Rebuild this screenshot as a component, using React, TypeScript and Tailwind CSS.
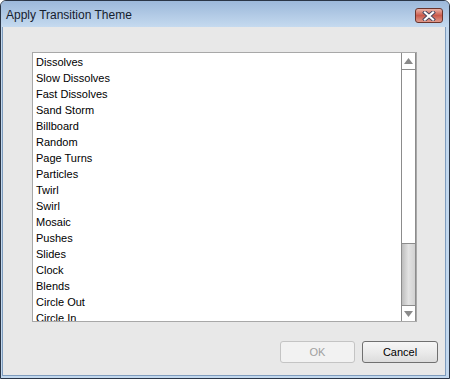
const items = [
  'Dissolves',
  'Slow Dissolves',
  'Fast Dissolves',
  'Sand Storm',
  'Billboard',
  'Random',
  'Page Turns',
  'Particles',
  'Twirl',
  'Swirl',
  'Mosaic',
  'Pushes',
  'Slides',
  'Clock',
  'Blends',
  'Circle Out',
  'Circle In',
];

const font = { fontFamily: '"Liberation Sans", Arial, sans-serif' };

const CloseButton = () => (
  <div className="w-[28px] h-[15px] rounded-[3px] border border-[#6a342c] bg-gradient-to-b from-[#eab3a8] via-[#c95a4c] to-[#df988a] flex items-center justify-center">
    <svg width="14" height="10" viewBox="0 0 14 10">
      <path d="M3 1.5 L11 8.5 M11 1.5 L3 8.5" stroke="#46465e" strokeWidth="4" strokeLinecap="square" />
      <path d="M3 1.5 L11 8.5 M11 1.5 L3 8.5" stroke="#ffffff" strokeWidth="2.2" strokeLinecap="square" />
    </svg>
  </div>
);

const ScrollBar = () => (
  <div className="w-[15px] flex flex-col border-l border-r border-[#8c8c8c] bg-white">
    {/* up arrow */}
    <div className="h-[17px] border-b border-[#8c8c8c] flex items-center justify-center">
      <svg width="9" height="6" viewBox="0 0 9 6">
        <path d="M0 6 L4.5 0 L9 6 Z" fill="#8a8a8a" />
      </svg>
    </div>
    <div className="flex-1" />
    {/* thumb */}
    <div className="h-[63px] border-t border-b border-[#8c8c8c] bg-gradient-to-r from-[#bdbdbd] via-[#e2e2e2] to-[#d2d2d2]" />
    {/* down arrow */}
    <div className="h-[15px] flex items-center justify-center">
      <svg width="9" height="6" viewBox="0 0 9 6">
        <path d="M0 0 L9 0 L4.5 6 Z" fill="#8a8a8a" />
      </svg>
    </div>
  </div>
);

export default function App() {
  return (
    <div className="w-[450px] h-[379px] bg-white" style={font}>
      <div className="h-full flex flex-col border border-[#2a3546] rounded-t-[6px] overflow-hidden bg-[#c2d8ee]">
        {/* title bar */}
        <div className="h-[26px] shrink-0 flex items-center justify-between pl-[5px] pr-[6px] bg-gradient-to-b from-[#9cb8da] to-[#c5daef]">
          <span className="text-[12px] text-[#15202e] pt-[1px]">Apply Transition Theme</span>
          <div className="pt-[3px]">
            <CloseButton />
          </div>
        </div>

        {/* content */}
        <div className="flex-1 ml-[1px] mr-[3px] mb-[2px] border border-t-0 border-[#7f9cbd] bg-[#e8e8e8] flex flex-col">
          <div className="ml-[29px] mt-[25px] w-[385px] h-[270px] border border-[#a8a8a8] bg-white flex">
            <div className="flex-1 overflow-hidden pl-[3px] pt-[1px]">
              {items.map((item) => (
                <div key={item} className="h-[16px] leading-[16px] text-[11px] text-black whitespace-nowrap">
                  {item}
                </div>
              ))}
            </div>
            <ScrollBar />
          </div>

          <div className="flex-1" />

          {/* buttons */}
          <div className="flex justify-end gap-[7px] mr-[7px] mb-[12px]">
            <div className="w-[75px] h-[22px] rounded-[3px] border border-[#c4c4c4] bg-[#f2f2f2] flex items-center justify-center text-[11px] text-[#a0a0a0]">
              OK
            </div>
            <div className="w-[76px] h-[22px] rounded-[3px] border border-[#707070] bg-gradient-to-b from-[#f6f6f6] via-[#ebebeb] to-[#dcdcdc] flex items-center justify-center text-[11px] text-black">
              Cancel
            </div>
          </div>
        </div>
      </div>
    </div>
  );
}
